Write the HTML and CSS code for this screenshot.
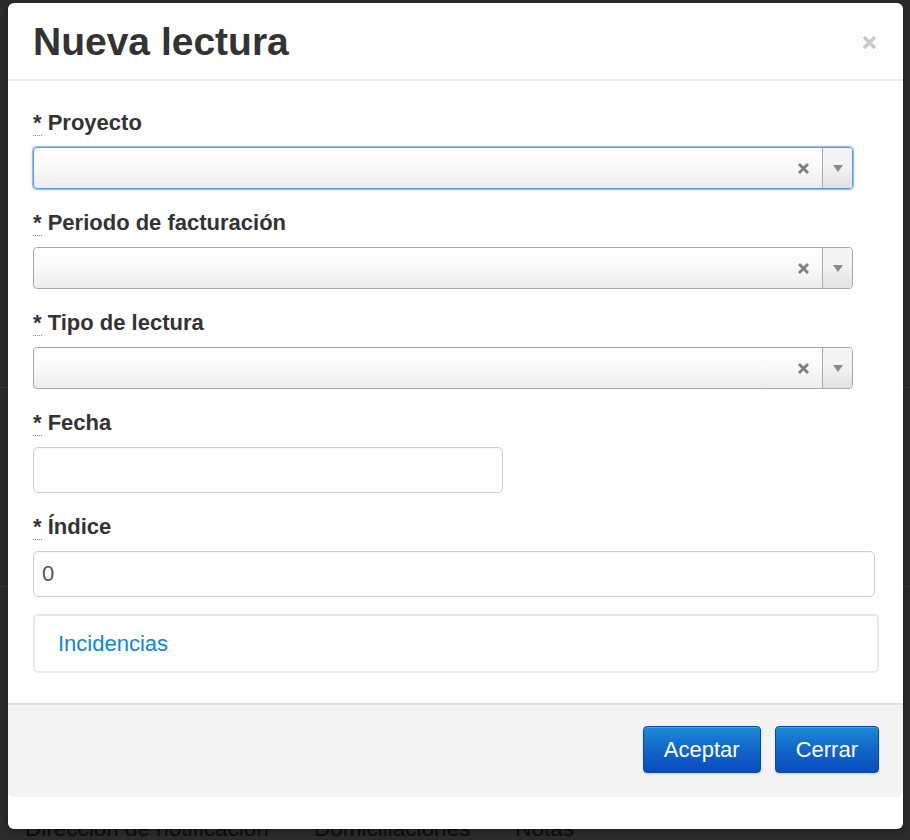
FILE: index.html
```html
<!DOCTYPE html>
<html lang="es">
<head>
<meta charset="utf-8">
<title>Nueva lectura</title>
<link rel="stylesheet" href="styles.css">
</head>
<body>
<div class="page">
  <div class="rule rule-a"></div>
  <div class="rule rule-b"></div>
  <ul class="tabs">
    <li>Dirección de notificación</li>
    <li>Domiciliaciones</li>
    <li>Notas</li>
  </ul>
</div>

<div class="modal">
  <div class="modal-header">
    <h3 class="modal-title">Nueva lectura</h3>
    <button class="close" type="button" aria-label="Cerrar">
      <svg width="15" height="15" viewBox="0 0 15 15"><path d="M2 2 L13 13 M13 2 L2 13" stroke="#c9c9c9" stroke-width="3.6" stroke-linecap="butt"/></svg>
    </button>
  </div>

  <div class="modal-body">
    <div class="field">
      <label class="label"><abbr title="requerido">*</abbr> Proyecto</label>
      <div class="select is-focused">
        <span class="select-choice"></span>
        <span class="select-clear"><svg width="13" height="11" viewBox="0 0 13 11"><path d="M2 1 L11 10 M11 1 L2 10" stroke="#7d7d7d" stroke-width="2.8"/></svg></span>
        <span class="select-arrow"><b></b></span>
      </div>
    </div>

    <div class="field">
      <label class="label"><abbr title="requerido">*</abbr> Periodo de facturación</label>
      <div class="select">
        <span class="select-choice"></span>
        <span class="select-clear"><svg width="13" height="11" viewBox="0 0 13 11"><path d="M2 1 L11 10 M11 1 L2 10" stroke="#7d7d7d" stroke-width="2.8"/></svg></span>
        <span class="select-arrow"><b></b></span>
      </div>
    </div>

    <div class="field">
      <label class="label"><abbr title="requerido">*</abbr> Tipo de lectura</label>
      <div class="select">
        <span class="select-choice"></span>
        <span class="select-clear"><svg width="13" height="11" viewBox="0 0 13 11"><path d="M2 1 L11 10 M11 1 L2 10" stroke="#7d7d7d" stroke-width="2.8"/></svg></span>
        <span class="select-arrow"><b></b></span>
      </div>
    </div>

    <div class="field">
      <label class="label"><abbr title="requerido">*</abbr> Fecha</label>
      <input class="input input-date" type="text" value="">
    </div>

    <div class="field field-last">
      <label class="label"><abbr title="requerido">*</abbr> Índice</label>
      <input class="input input-wide" type="text" value="0">
    </div>

    <div class="panel">
      <a class="panel-link" href="#">Incidencias</a>
    </div>
  </div>

  <div class="modal-footer">
    <button class="btn" type="button">Aceptar</button>
    <button class="btn" type="button">Cerrar</button>
  </div>
</div>
</body>
</html>
```

FILE: styles.css
```css
* {
  box-sizing: border-box;
}

html, body {
  margin: 0;
  padding: 0;
}

body {
  width: 910px;
  height: 840px;
  overflow: hidden;
  background: #2c2c2c;
  font-family: "Liberation Sans", Arial, Helvetica, sans-serif;
  color: #333;
  position: relative;
}

/* dimmed page behind the modal */
.page {
  display: flex;
  flex-direction: column;
}

.rule {
  height: 1px;
  background: #383838;
}

.rule-a {
  margin-top: 387px;
}

.rule-b {
  margin-top: 198px;
}

.tabs {
  list-style: none;
  margin: 229px 0 0 0;
  padding: 0 0 0 25px;
  display: flex;
  gap: 45px;
  font-size: 22.5px;
  line-height: 26px;
  color: #0e0e0e;
}

/* modal */
.modal {
  position: absolute;
  top: 3px;
  left: 8px;
  width: 895px;
  background: #fff;
  border-radius: 6px;
  padding-bottom: 32px;
  box-shadow: 0 2px 8px rgba(0, 0, 0, 0.35);
}

.modal-header {
  display: flex;
  align-items: center;
  justify-content: space-between;
  padding: 17px 26px 15px 25px;
  border-bottom: 2px solid #ebebeb;
}

.modal-title {
  margin: 0;
  font-size: 39px;
  line-height: 44px;
  font-weight: bold;
  color: #333;
}

.close {
  border: 0;
  background: none;
  padding: 0;
  margin: 0;
  width: 15px;
  height: 15px;
  display: block;
  cursor: pointer;
}

.close svg {
  display: block;
}

.modal-body {
  padding: 29px 24px 30px 25px;
}

.field {
  margin-bottom: 21px;
}

.field-last {
  margin-bottom: 17px;
}

.label {
  display: block;
  font-size: 22px;
  line-height: 26px;
  font-weight: bold;
  color: #333;
  margin-bottom: 11px;
}

.label abbr {
  text-decoration: none;
  border-bottom: 1px dotted #888;
  cursor: help;
}

/* select2-like combo */
.select {
  width: 820px;
  height: 42px;
  display: flex;
  align-items: stretch;
  border: 1px solid #aaa;
  border-radius: 4px;
  background: linear-gradient(to top, #ececec 0%, #fafafa 55%, #fff 100%);
  overflow: hidden;
}

.select.is-focused {
  border-color: #5a97f5;
  box-shadow: 0 0 0 1px rgba(90, 151, 245, 0.55), 0 0 3px rgba(90, 151, 245, 0.6);
}

.select-choice {
  flex: 1;
}

.select-clear {
  width: 13px;
  margin-right: 12px;
  display: flex;
  align-items: center;
  padding-top: 1px;
}

.select-clear svg {
  display: block;
}

.select-arrow {
  width: 30px;
  border-left: 1px solid #aaa;
  background: linear-gradient(to top, #e2e2e2 0%, #f4f4f4 60%);
  display: flex;
  align-items: center;
  justify-content: center;
}

.select-arrow b {
  display: block;
  width: 0;
  height: 0;
  border-left: 5px solid transparent;
  border-right: 5px solid transparent;
  border-top: 7px solid #8a8a8a;
  margin-top: 1px;
}

/* text inputs */
.input {
  display: block;
  height: 46px;
  border: 1px solid #cfcfcf;
  border-radius: 5px;
  padding: 0 8px;
  font-family: "Liberation Sans", Arial, Helvetica, sans-serif;
  font-size: 22px;
  color: #555;
  background: #fff;
  box-shadow: inset 0 1px 1px rgba(0, 0, 0, 0.04);
  outline: none;
}

.input-date {
  width: 470px;
}

.input-wide {
  width: 842px;
}

/* incidencias panel */
.panel {
  height: 59px;
  border: 2px solid #e8e8e8;
  border-radius: 5px;
  display: flex;
  align-items: center;
  padding: 0 22px 0 23px;
}

.panel-link {
  font-size: 22px;
  line-height: 26px;
  color: #0e87d2;
  text-decoration: none;
}

/* footer */
.modal-footer {
  background: #f3f3f3;
  border-top: 2px solid #e0e0e0;
  border-radius: 0 0 6px 6px;
  padding: 21px 24px 24px 24px;
  display: flex;
  justify-content: flex-end;
  gap: 14px;
}

.btn {
  height: 47px;
  padding: 0 20px;
  border: 1px solid #0b4aa9;
  border-radius: 4px;
  background: linear-gradient(to bottom, #1d89d3 0%, #1266c9 50%, #0a4bbe 100%);
  box-shadow: inset 0 1px 0 rgba(255, 255, 255, 0.2), 0 1px 2px rgba(0, 0, 0, 0.15);
  color: #fff;
  font-family: "Liberation Sans", Arial, Helvetica, sans-serif;
  font-size: 22px;
  line-height: 26px;
  cursor: pointer;
}
```
